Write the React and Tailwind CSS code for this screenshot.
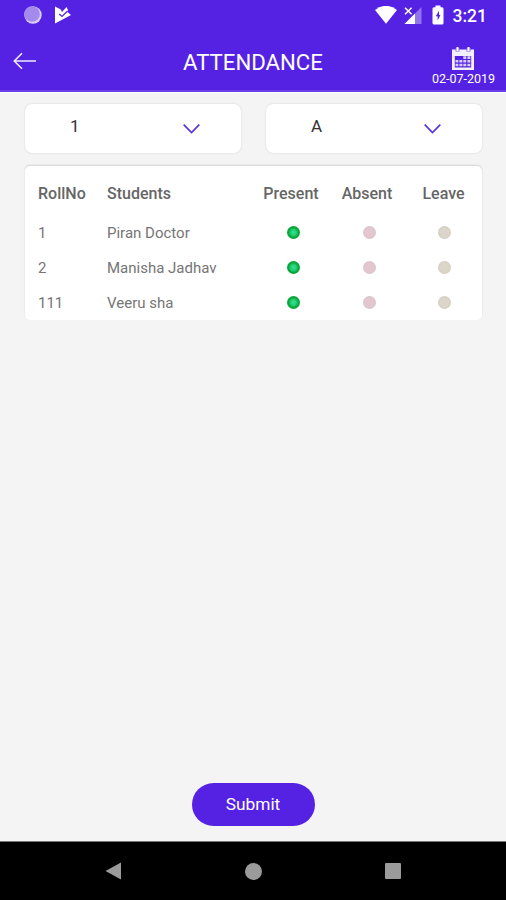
import { useState } from "react";

const students = [
    { roll: "1", name: "Piran Doctor" },
    { roll: "2", name: "Manisha Jadhav" },
    { roll: "111", name: "Veeru sha" },
];

function StatusBar() {
    return (
        <div className="flex h-[31px] items-center pl-6 pr-[19px] text-white">
            <svg className="-mt-px" width="18" height="18" viewBox="0 0 18 18">
                <circle cx="9" cy="9" r="8.7" fill="#d9cdfa" />
                <circle cx="8" cy="8" r="7.8" fill="#a58aee" />
            </svg>
            <svg className="-mt-px ml-3" width="18" height="18" viewBox="0 0 18 18">
                <path d="M1 0.5 L6.8 3.6 L8 6 L12.6 1 L14 4.2 L13.4 6 L17 9 L1 17.4 Z" fill="#fff" />
                <path d="M5.2 8 L8 10.4 L13.6 5" fill="none" stroke="#5522e4" strokeWidth="1.3" />
            </svg>

            <svg className="-mt-px ml-auto" width="22" height="18" viewBox="0 0 22 18">
                <path d="M0 4 Q11 -4.4 22 4 L11 17.8 Z" fill="#fff" />
            </svg>
            <svg className="ml-[7px]" width="18" height="19" viewBox="0 0 18 19">
                <path d="M17.5 1 V18 H0.5 Z" fill="#9273ec" />
                <path d="M11 7.5 V18 H0.5 Z" fill="#fff" />
                <path d="M1 1.7 L7.6 8.3 M7.6 1.7 L1 8.3" stroke="#fff" strokeWidth="1.5" />
            </svg>
            <svg className="-mt-px ml-[10px]" width="12" height="20" viewBox="0 0 12 20">
                <path d="M3.5 0.5 H8.5 V2.3 H10 Q11.5 2.3 11.5 3.8 V18 Q11.5 19.5 10 19.5 H2 Q0.5 19.5 0.5 18 V3.8 Q0.5 2.3 2 2.3 H3.5 Z" fill="#fff" />
                <path d="M7 5.8 L3.8 11.2 H5.6 V15.6 L8.5 9.9 H7 Z" fill="#5522e4" />
            </svg>
            <span className="mt-[2px] ml-[9px] text-[17.5px] leading-none font-medium">3:21</span>
        </div>
    );
}

function CalendarIcon() {
    return (
        <svg width="22" height="23" viewBox="0 0 22 23">
            <path d="M0 2.5 H22 V23 H0 Z" fill="#f3effe" />
            <path d="M2.8 9 H19.2 V20.5 H2.8 Z" fill="#5522e4" />
            <path d="M11.3 9.3h3v2.6h-3z M15.4 9.3h3v2.6h-3z M7.4 13h3v2.6h-3z M11.3 13h3v2.6h-3z M15.4 13h3v2.6h-3z M3.5 13h2.9v2.6h-2.9z M3.5 16.7h2.9v2.6h-2.9z M7.4 16.7h3v2.6h-3z M11.3 16.7h3v2.6h-3z M15.4 16.7h3v2.6h-3z" fill="#d8ccfb" />
            <path d="M5.5 1 V4.6 M16.5 1 V4.6" stroke="#8a68ec" strokeWidth="4" />
            <path d="M5.5 0 V4 M16.5 0 V4" stroke="#fff" strokeWidth="2" />
        </svg>
    );
}

function Select({ value }) {
    return (
        <button className="flex h-[49px] w-[216px] items-center rounded-[7px] bg-white pl-[45px] pr-[41px] text-[17px] text-[#333] shadow-[0_0_2px_rgba(0,0,0,0.16)]">
            <span className="-mt-1">{value}</span>
            <svg className="ml-auto" width="17" height="10" viewBox="0 0 17 10">
                <path d="M0.7 0.7 L8.5 8.5 L16.3 0.7" fill="none" stroke="#5a35dc" strokeWidth="1.7" />
            </svg>
        </button>
    );
}

function Dot({ color }) {
    return <span className={"-mt-px block h-[13px] w-[13px] justify-self-center rounded-full " + color} />;
}

export default function App() {
    const [section] = useState("A");

    return (
        <div className="flex h-[900px] w-[506px] flex-col overflow-hidden bg-[#f4f4f4] font-[Roboto,sans-serif]">
            {/* HEADER */}
            <header className="h-[92px] shrink-0 border-b-2 border-[#6b40ea] bg-[#5522e4] text-white">
                <StatusBar />
                <div className="grid h-[59px] grid-cols-[120px_1fr_120px]">
                    <svg className="mt-[21px] ml-[13px]" width="24" height="18" viewBox="0 0 24 18">
                        <path d="M23 9 H1.5 M9 1.3 L1.3 9 L9 16.7" fill="none" stroke="#efeafe" strokeWidth="1.6" />
                    </svg>
                    <h1 className="mt-[17px] text-center text-[22.2px] leading-[28px]">ATTENDANCE</h1>
                    <div className="mt-[16px] mr-[11px] flex flex-col items-center self-start justify-self-end">
                        <CalendarIcon />
                        <span className="mt-px text-[12.5px] leading-[15px]">02-07-2019</span>
                    </div>
                </div>
            </header>

            {/* CLASS AND SECTION */}
            <div className="flex justify-between border-t border-white pt-[11px] pr-6 pl-[25px]">
                <Select value="1" />
                <Select value={section} />
            </div>

            {/* STUDENTS */}
            <div className="mt-[13px] mr-6 ml-[25px] h-[154px] rounded-[5px] bg-white pt-[13px] pl-[13px] text-[15px] shadow-[0_-1px_2px_rgba(0,0,0,0.14)]">
                <div className="grid h-[30px] grid-cols-[69px_146px_76px_76px_77px] items-center text-[16px] font-medium text-[#666]">
                    <span>RollNo</span>
                    <span>Students</span>
                    <span className="justify-self-center">Present</span>
                    <span className="justify-self-center">Absent</span>
                    <span className="justify-self-center">Leave</span>
                </div>
                <div className="mt-[6px]">
                    {students.map((s) => (
                        <div className="grid h-[35px] grid-cols-[69px_149px_75px_76px_75px] items-center text-[#757575]" key={s.roll}>
                            <span className="mt-px">{s.roll}</span>
                            <span className="mt-px">{s.name}</span>
                            <Dot color="bg-[radial-gradient(circle,#35e096_0,#22d077_30%,#0aa63a_55%)]" />
                            <Dot color="bg-[radial-gradient(circle,#e4c6ce_45%,#d9c5ca_70%)]" />
                            <Dot color="bg-[radial-gradient(circle,#dcd6ca_45%,#d4cec0_70%)]" />
                        </div>
                    ))}
                </div>
            </div>

            <button className="mt-auto mb-[15px] h-[43px] w-[123px] self-center rounded-full bg-[#5522e4] pt-px text-[17.3px] text-white">
                Submit
            </button>

            {/* NAVIGATION */}
            <nav className="flex h-[59px] shrink-0 items-center justify-between border-t border-t-[#777] bg-black pr-[105px] pl-[105px]">
                <svg width="17" height="18" viewBox="0 0 17 18">
                    <path d="M0.5 9 L16 0.5 V17.5 Z" fill="#9b9b9b" />
                </svg>
                <span className="h-[17px] w-[17px] rounded-full bg-[#9b9b9b]" />
                <span className="h-4 w-4 rounded-[1px] bg-[#9b9b9b]" />
            </nav>
        </div>
    );
}
